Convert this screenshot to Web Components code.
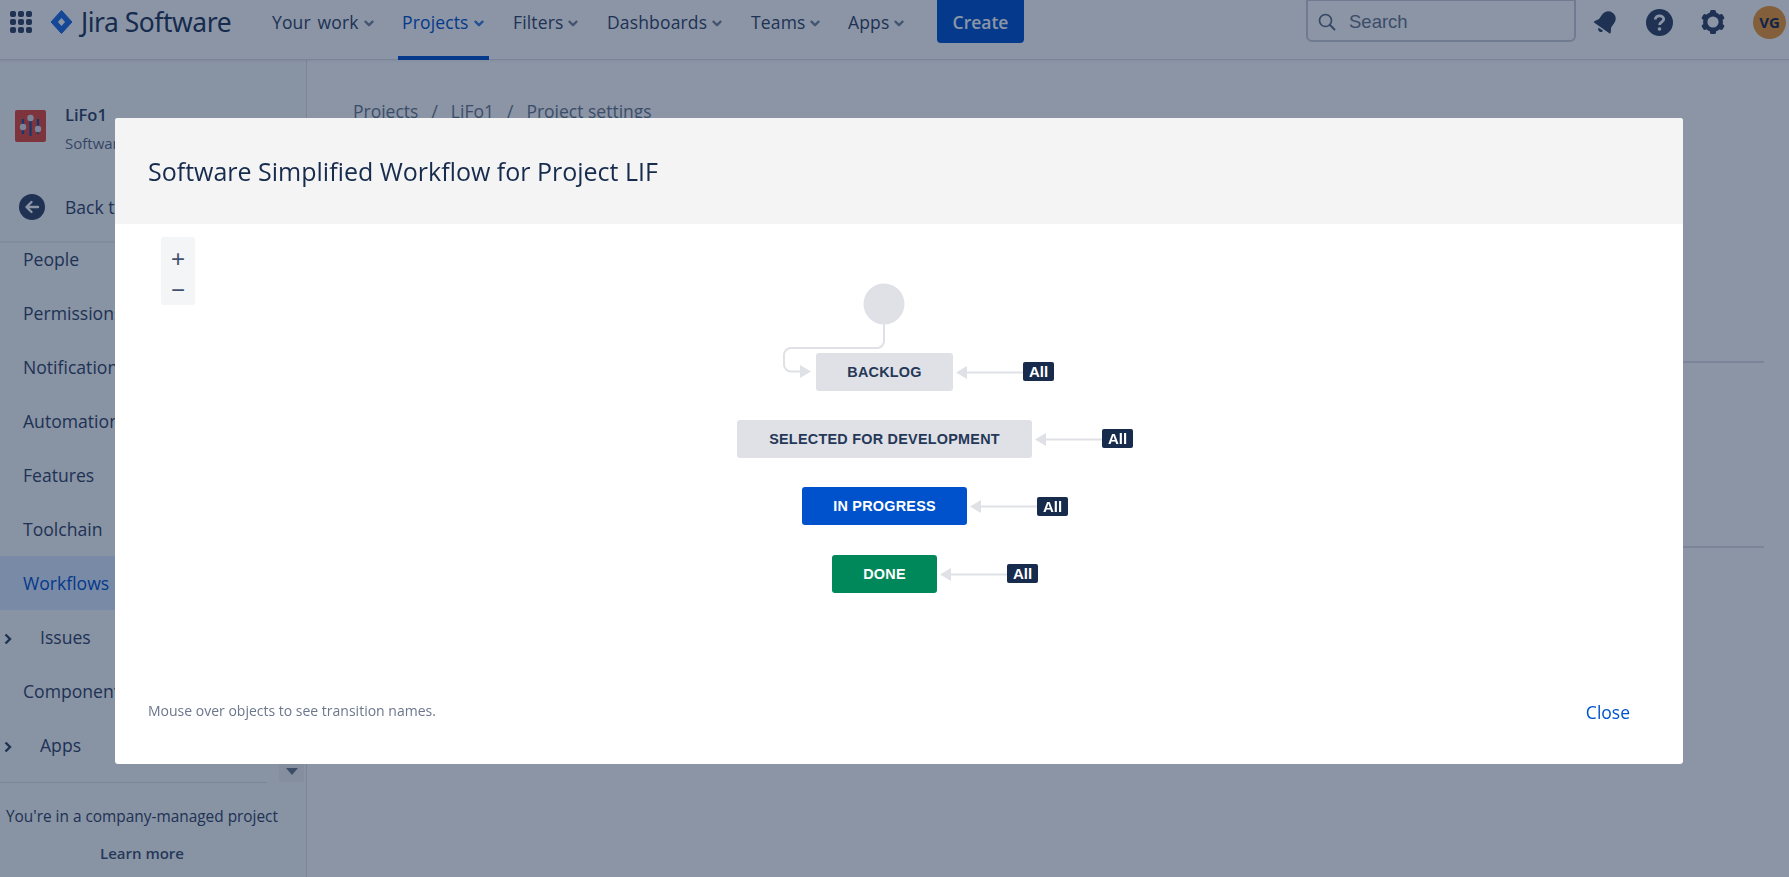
<!DOCTYPE html>
<html lang="en">
<head>
<meta charset="utf-8">
<title>Project settings - Jira</title>
<style>
  html, body { margin: 0; height: 100%; overflow: hidden; background: #fff; }
  body { font-family: "Open Sans", "Noto Sans", sans-serif; color: #344563; }
  .stage { display: flex; flex-direction: column; height: 877px; }
  .main { display: flex; flex: 1; min-height: 0; }
</style>
</head>
<body>
<div class="stage">
  <jira-nav></jira-nav>
  <div class="main">
    <project-sidebar></project-sidebar>
    <settings-content></settings-content>
  </div>
</div>
<modal-blanket></modal-blanket>
<workflow-modal title="Software Simplified Workflow for Project LIF">
  <workflow-diagram></workflow-diagram>
</workflow-modal>

<script>
const chevron = `<svg width="12" height="12" viewBox="0 0 12 12"><path d="M1.800 4l4.200 4.200L10.200 4" fill="none" stroke="currentColor" stroke-width="2.400" stroke-linejoin="round"/></svg>`;

/* Top navigation bar */
class JiraNav extends HTMLElement {
  constructor() {
    super();
    this.attachShadow({ mode: 'open' });
  }

  connectedCallback() {
    const items = [
      ['Your work', 130, false],
      ['Projects', 111, true],
      ['Filters', 94, false],
      ['Dashboards', 144, false],
      ['Teams', 97, false],
      ['Apps', 93, false]
    ];
    const itemsHTML = items.map(([label, width, active]) =>
      `<div class="slot" style="width:${width}px"><a class="item ${active ? 'active' : ''}">${label}<span class="chev">${chevron}</span></a></div>`
    ).join('');
    const dots = Array.from({ length: 9 }, () => '<i></i>').join('');

    this.shadowRoot.innerHTML = `
      <style>
        :host { display: flex; align-items: flex-start; height: 60px; flex: none; box-sizing: border-box; border-bottom: 1px solid #dfe1e6; box-shadow: 0 1px 2px rgba(9,30,66,.08); font-family: "Open Sans", sans-serif; position: relative; z-index: 1; }
        .grid { display: grid; grid-template-columns: repeat(3, 6px); grid-auto-rows: 6px; gap: 2px; margin: 11px 0 0 10px; width: 22px; flex: none; }
        .grid i { background: #344563; border-radius: 2px; }
        .logo { display: flex; align-items: center; margin: 9px 0 0 18px; height: 26px; flex: none; }
        .brand { font-family: "Noto Sans", sans-serif; font-size: 26.400px; font-weight: 400; color: #253858; margin-left: 8px; letter-spacing: -.45px; line-height: 26px; white-space: nowrap; width: 150px; }
        nav { display: flex; margin-left: 37px; height: 59px; flex: none; }
        .slot { display: flex; align-items: flex-start; }
        .item { display: flex; align-items: flex-start; padding: 11px 4px 0; height: 45px; font-size: 17.500px; line-height: 23px; font-weight: 500; letter-spacing: .15px; word-spacing: 2px; color: #344563; white-space: nowrap; }
        .item .chev { display: flex; color: #7a869a; margin: 6px 0 0 4px; height: 12px; }
        .active { color: #0052cc; border-bottom: 4px solid #0052cc; }
        .active .chev { color: #3b7bdc; }
        .create { width: 87px; height: 43px; background: #0052cc; color: #fff; border-radius: 0 0 4px 4px; font-size: 17.500px; font-weight: 600; display: flex; align-items: center; justify-content: center; flex: none; }
        .right { margin-left: auto; display: flex; align-items: flex-start; }
        .search { width: 270px; height: 42px; box-sizing: border-box; border: 2px solid #c9ced8; border-top-width: 1px; border-radius: 0 0 6px 6px; display: flex; align-items: center; padding: 2px 0 0 10px; font-size: 18.500px; color: #6b778c; font-family: "Liberation Sans", sans-serif; }
        .search svg { margin-right: 13px; }
        .icons { display: flex; align-items: center; height: 44px; margin-left: 17px; gap: 27px; margin-right: 3px; }
        .avatar { width: 33px; height: 33px; border-radius: 50%; background: #f09a36; color: #172b4d; font-size: 15px; font-weight: 700; display: flex; align-items: center; justify-content: center; }
      </style>
      <div class="grid">${dots}</div>
      <div class="logo">
        <svg width="23" height="24" viewBox="0 0 22 24">
          <path d="M11 0.500L21.500 12 11 23.500 .5 12z" fill="#1f6fe0" stroke="#1f6fe0" stroke-linejoin="round"/>
          <path d="M11 8l3.600 4L11 16l-3.600-4z" fill="#fff"/>
        </svg>
        <span class="brand">Jira Software</span>
      </div>
      <nav>${itemsHTML}</nav>
      <div class="create">Create</div>
      <div class="right">
        <div class="search">
          <svg width="18" height="18" viewBox="0 0 18 18"><circle cx="7.500" cy="7.500" r="6" fill="none" stroke="#5e6c84" stroke-width="1.700"/><path d="M12 12l4.500 4.500" stroke="#5e6c84" stroke-width="1.900" stroke-linecap="round"/></svg>
          Search
        </div>
        <div class="icons">
          <svg width="26" height="26" viewBox="0 0 24 24" fill="#344563"><g transform="rotate(35 12 12)"><path d="M12 1.500c-4.200 0-6.800 3-6.800 7.200v4.800L2.800 17.500v1.200h18.400v-1.200l-2.400-4V8.700c0-4.200-2.600-7.200-6.800-7.200z"/><path d="M9.500 20.200h5c0 1.500-1 2.500-2.500 2.500s-2.500-1-2.500-2.500z"/></g></svg>
          <svg width="27" height="27" viewBox="0 0 27 27"><circle cx="13.500" cy="13.500" r="13.500" fill="#344563"/><path d="M9.300 10.600c0-2.400 1.900-3.800 4.200-3.800s4.200 1.400 4.200 3.500c0 2.900-4.100 2.900-4.100 5.600" fill="none" stroke="#fff" stroke-width="2.800"/><circle cx="13.500" cy="20" r="1.800" fill="#fff"/></svg>
          <svg width="26" height="26" viewBox="0 0 26 26" fill="#344563"><circle cx="13" cy="13" r="7.800" fill="none" stroke="#344563" stroke-width="4.400"/><g><rect x="10" y="1" width="6" height="5" rx="1.500"/><rect x="10" y="20" width="6" height="5" rx="1.500"/><rect x="10" y="1" width="6" height="5" rx="1.500" transform="rotate(60 13 13)"/><rect x="10" y="20" width="6" height="5" rx="1.500" transform="rotate(60 13 13)"/><rect x="10" y="1" width="6" height="5" rx="1.500" transform="rotate(120 13 13)"/><rect x="10" y="20" width="6" height="5" rx="1.500" transform="rotate(120 13 13)"/></g></svg>
          <div class="avatar">VG</div>
        </div>
      </div>
    `;
  }
}

/* Left project sidebar */
class ProjectSidebar extends HTMLElement {
  constructor() {
    super();
    this.attachShadow({ mode: 'open' });
  }

  connectedCallback() {
    const rows = [
      ['People', 'first'], ['Permissions'], ['Notifications'], ['Automation'], ['Features'], ['Toolchain'],
      ['Workflows', 'on'], ['Issues', 'sub'], ['Components'], ['Apps', 'sub']
    ];
    const rowsHTML = rows.map(([label, kind]) => `
      <div class="row ${kind || ''}">
        ${kind === 'sub' ? '<svg class="caret" width="10" height="12" viewBox="0 0 10 12"><path d="M2.500 1.500L7 6l-4.500 4.500" fill="none" stroke="#344563" stroke-width="2.400"/></svg>' : ''}
        <span>${label}</span>
      </div>`).join('');

    this.shadowRoot.innerHTML = `
      <style>
        :host { display: flex; flex-direction: column; width: 307px; flex: none; box-sizing: border-box; border-right: 1px solid #dfe1e6; background: #fafbfc; font-family: "Open Sans", sans-serif; color: #344563; overflow: hidden; position: relative; }
        .head { height: 183px; flex: none; box-sizing: border-box; border-bottom: 2px solid #ebecf0; padding: 49px 0 0 15px; }
        .project { display: flex; gap: 19px; }
        .tile { width: 31px; height: 32px; flex: none; margin-top: 1px; }
        .name { font-size: 16.500px; font-weight: 600; line-height: 20px; margin-top: -4px; }
        .kind { font-size: 15px; color: #5e6c84; line-height: 20px; margin-top: 8px; white-space: nowrap; }
        .back { display: flex; align-items: center; gap: 20px; margin: 41px 0 0 4px; font-size: 17.500px; white-space: nowrap; }
        .list { height: 539px; flex: none; overflow: hidden; }
        .row { height: 54px; display: flex; align-items: center; padding-left: 23px; font-size: 17.600px; position: relative; white-space: nowrap; }
        .row.first { margin-top: -11px; }
        .row.on { background: #deebff; color: #0052cc; }
        .row.sub { padding-left: 40px; }
        .caret { position: absolute; left: 3px; top: 23px; }
        .scroll { position: absolute; left: 279px; top: 700px; height: 22px; width: 25px; background: #f1f1f1; display: flex; align-items: flex-end; justify-content: center; padding-bottom: 7px; box-sizing: border-box; }
        .foot { flex: 1; border-top: 1px solid #dfe1e6; margin-right: 39px; }
        .note { width: 284px; text-align: center; font-size: 15.400px; padding-top: 24px; line-height: 20px; white-space: nowrap; }
        .learn { width: 284px; text-align: center; font-size: 15px; font-weight: 600; color: #42526e; margin-top: 16px; line-height: 20px; }
      </style>
      <div class="head">
        <div class="project">
          <svg class="tile" viewBox="0 0 31 32">
            <rect width="31" height="32" rx="2" fill="#e5493a"/>
            <path d="M8 9v15M15.500 5v21M23 9v15" stroke="#1d4f9c" stroke-width="2.200"/>
            <circle cx="8" cy="17" r="3.200" fill="#dfe1e6"/><circle cx="15.500" cy="8" r="3.200" fill="#dfe1e6"/><circle cx="23" cy="19" r="3.200" fill="#dfe1e6"/>
          </svg>
          <div>
            <div class="name">LiFo1</div>
            <div class="kind">Software project</div>
          </div>
        </div>
        <div class="back">
          <svg width="26" height="26" viewBox="0 0 26 26"><circle cx="13" cy="13" r="13" fill="#344563"/><path d="M19 13H8M12.500 8l-5 5 5 5" fill="none" stroke="#fff" stroke-width="2.400" stroke-linecap="round" stroke-linejoin="round"/></svg>
          <span>Back to project</span>
        </div>
      </div>
      <div class="list">${rowsHTML}</div>
      <div class="scroll"><svg width="12" height="7" viewBox="0 0 12 7"><path d="M0 0h12L6 7z" fill="#6b778c"/></svg></div>
      <div class="foot">
        <div class="note">You're in a company-managed project</div>
        <div class="learn">Learn more</div>
      </div>
    `;
  }
}

/* Page content sitting behind the dialog */
class SettingsContent extends HTMLElement {
  constructor() {
    super();
    this.attachShadow({ mode: 'open' });
  }

  connectedCallback() {
    this.shadowRoot.innerHTML = `
      <style>
        :host { display: block; flex: 1; padding: 39px 25px 0 46px; font-family: "Open Sans", sans-serif; color: #6b778c; }
        .crumbs { font-size: 17.500px; line-height: 24px; display: flex; gap: 13px; }
        .rule { height: 2px; background: #dfe1e6; }
        .r1 { margin-top: 238px; }
        .r2 { margin-top: 183px; }
      </style>
      <div class="crumbs"><span>Projects</span><span>/</span><span>LiFo1</span><span>/</span><span>Project settings</span></div>
      <div class="rule r1"></div>
      <div class="rule r2"></div>
    `;
  }
}

/* Dim layer over the page */
class ModalBlanket extends HTMLElement {
  constructor() {
    super();
    this.attachShadow({ mode: 'open' });
    this.shadowRoot.innerHTML = `<style>:host { position: fixed; inset: 0; background: rgba(9,30,66,.47); z-index: 5; }</style>`;
  }
}

/* Dialog with header, diagram slot and footer */
class WorkflowModal extends HTMLElement {
  constructor() {
    super();
    this.attachShadow({ mode: 'open' });
  }

  connectedCallback() {
    this.shadowRoot.innerHTML = `
      <style>
        :host { position: fixed; left: 115px; top: 118px; width: 1568px; height: 646px; z-index: 6; display: flex; flex-direction: column; background: #fff; border-radius: 3px; overflow: hidden; font-family: "Open Sans", sans-serif; }
        header { height: 106px; flex: none; background: #f4f4f4; display: flex; align-items: center; padding-left: 33px; font-size: 25px; color: #172b4d; }
        .body { flex: 1; position: relative; }
        footer { height: 106px; flex: none; display: flex; justify-content: space-between; align-items: flex-start; padding: 0 53px 0 33px; }
        .hint { font-size: 14px; color: #6b778c; line-height: 20px; margin-top: 43px; }
        .close { font-size: 17.500px; color: #0052cc; line-height: 24px; margin-top: 42px; }
      </style>
      <header>${this.getAttribute('title')}</header>
      <div class="body"><slot></slot></div>
      <footer>
        <div class="hint">Mouse over objects to see transition names.</div>
        <div class="close">Close</div>
      </footer>
    `;
  }
}

/* One status box, placed on the diagram canvas */
class WfStatus extends HTMLElement {
  constructor() {
    super();
    this.attachShadow({ mode: 'open' });
    this.shadowRoot.innerHTML = `
      <style>
        :host { position: absolute; display: flex; align-items: center; justify-content: center; box-sizing: border-box; border-radius: 3px; font: bold 14.400px "Liberation Sans", Arial, sans-serif; letter-spacing: .25px; white-space: nowrap; background: var(--bg, #dfe1e6); color: var(--fg, #253858); }
      </style>
      <slot></slot>
    `;
  }
}

class WfBadge extends HTMLElement {
  constructor() {
    super();
    this.attachShadow({ mode: 'open' });
    this.shadowRoot.innerHTML = `
      <style>
        :host { position: absolute; width: 31px; height: 19px; display: flex; align-items: center; justify-content: center; background: #172b4d; color: #fff; border-radius: 2px; font: bold 15px "Liberation Sans", Arial, sans-serif; }
      </style>
      <slot></slot>
    `;
  }
}

/* The workflow canvas. Coordinates are relative to the modal body, which starts at 115,224 */
class WorkflowDiagram extends HTMLElement {
  constructor() {
    super();
    this.attachShadow({ mode: 'open' });
  }

  connectedCallback() {
    const ox = 115, oy = 224;
    const statuses = [
      { label: 'BACKLOG', x: 816, y: 353, w: 137, h: 38 },
      { label: 'SELECTED FOR DEVELOPMENT', x: 737, y: 420, w: 295, h: 38 },
      { label: 'IN PROGRESS', x: 802, y: 487, w: 165, h: 38, bg: '#0052cc', fg: '#fff' },
      { label: 'DONE', x: 832, y: 555, w: 105, h: 38, bg: '#00875a', fg: '#fff' }
    ];
    const badges = [[1023, 362], [1102, 429], [1037, 497], [1007, 564]];

    const boxes = statuses.map(s => {
      const colors = s.bg ? `--bg:${s.bg};--fg:${s.fg};` : '';
      return `<wf-status style="left:${s.x - ox}px;top:${s.y - oy}px;width:${s.w}px;height:${s.h}px;${colors}">${s.label}</wf-status>`;
    }).join('');
    const tags = badges.map(([x, y]) =>
      `<wf-badge style="left:${x - ox}px;top:${y - oy}px">All</wf-badge>`
    ).join('');
    const arrows = statuses.map((s, i) => {
      const t = s.x + s.w + 3 - ox;
      const cy = s.y + s.h / 2 + 0.5 - oy;
      const end = badges[i][0] - ox;
      return `<path d="M${t} ${cy}l11-6.500v13z" fill="#dfe1e6"/><path d="M${t + 10} ${cy}H${end}" stroke="#dfe1e6" stroke-width="2"/>`;
    }).join('');

    this.shadowRoot.innerHTML = `
      <style>
        :host { position: absolute; inset: 0; display: block; }
        svg.lines { position: absolute; left: 0; top: 0; width: 100%; height: 100%; }
        .zoom { position: absolute; left: 46px; top: 13px; width: 34px; height: 68px; background: #f4f5f7; border-radius: 3px; display: flex; flex-direction: column; align-items: center; color: #42526e; font: 24px/31px "Liberation Sans", sans-serif; }
        .zoom span { height: 31px; }
        .zoom span:first-child { margin-top: 6px; }
      </style>
      <div class="zoom"><span>+</span><span>−</span></div>
      <svg class="lines" xmlns="http://www.w3.org/2000/svg">
        <circle cx="${884 - ox}" cy="${304 - oy}" r="20.500" fill="#dfe1e6"/>
        <path d="M${884 - ox} ${324 - oy}V${341 - oy}a7 7 0 0 1-7 7H${791 - ox}a7 7 0 0 0-7 7V${364 - oy}a7 7 0 0 0 7 7.500H${802 - ox}" fill="none" stroke="#dfe1e6" stroke-width="2"/>
        <path d="M${811 - ox} ${371.500 - oy}l-11-6.500v13z" fill="#dfe1e6"/>
        ${arrows}
      </svg>
      ${boxes}
      ${tags}
    `;
  }
}

customElements.define('jira-nav', JiraNav);
customElements.define('project-sidebar', ProjectSidebar);
customElements.define('settings-content', SettingsContent);
customElements.define('modal-blanket', ModalBlanket);
customElements.define('workflow-modal', WorkflowModal);
customElements.define('wf-status', WfStatus);
customElements.define('wf-badge', WfBadge);
customElements.define('workflow-diagram', WorkflowDiagram);
</script>
</body>
</html>
